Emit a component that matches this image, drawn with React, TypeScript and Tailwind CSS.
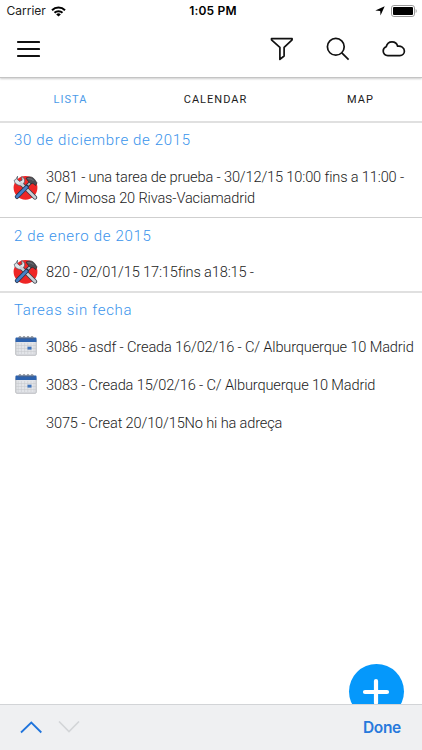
import type { ReactNode } from 'react';

type TaskIcon = 'tools' | 'calendar' | 'none';

interface Task {
  id: number;
  icon: TaskIcon;
  lines: string[];
}

interface Section {
  title: string;
  className: string;
  rowClassName: string;
  tasks: Task[];
}

const sections: Section[] = [
  {
    title: '30 de diciembre de 2015',
    className: 'h-[95px] border-b border-[#cfcfcf]',
    rowClassName: 'h-[58px]',
    tasks: [
      {
        id: 3081,
        icon: 'tools',
        lines: ['3081 - una tarea de prueba - 30/12/15 10:00 fins a 11:00 -', 'C/ Mimosa 20 Rivas-Vaciamadrid'],
      },
    ],
  },
  {
    title: '2 de enero de 2015',
    className: 'h-[75px] border-b-2 border-[#e0e0e0] pt-px',
    rowClassName: 'h-[35px]',
    tasks: [{ id: 820, icon: 'tools', lines: ['820 - 02/01/15 17:15fins a18:15 -'] }],
  },
  {
    title: 'Tareas sin fecha',
    className: '',
    rowClassName: 'relative -top-px h-[38.3px]',
    tasks: [
      { id: 3086, icon: 'calendar', lines: ['3086 - asdf - Creada 16/02/16 - C/ Alburquerque 10 Madrid'] },
      { id: 3083, icon: 'calendar', lines: ['3083 - Creada 15/02/16 - C/ Alburquerque 10 Madrid'] },
      { id: 3075, icon: 'none', lines: ['3075 - Creat 20/10/15No hi ha adreça'] },
    ],
  },
];

function ToolsIcon() {
  return (
    <svg width="25" height="25" viewBox="0 0 25 25" fill="none">
      <circle cx="12.5" cy="12.8" r="11.9" fill="#ee2626" />
      {/* hammer */}
      <path d="m12 13 6-6" stroke="#2b3442" strokeWidth="3.6" />
      <path d="m12 13 6-6" stroke="#aab6c2" strokeWidth="1.8" />
      <path d="M13 3.2c3-2 6.4-1.6 8.4 1L24 7.9l-1.5 2.6-2.6-2.2-2.2.4-2.5-2.6Z" fill="#4b4d53" stroke="#26282d" strokeWidth=".7" />
      <path d="m14.5 3.6 4.2.6 1.8 1.8" stroke="#7d8189" strokeWidth=".8" />
      {/* wrench */}
      <path d="M8 8.5 22 22.5" stroke="#3a3f49" strokeWidth="4.2" strokeLinecap="round" />
      <path
        d="M4.6 1.2 4.2 4.4l2.4 2 2.5-1.2-.4-3.5c2.8 1 3.5 4.1 2.3 6.2L8.5 10.2C5.5 11 1.7 9.2 1.2 5.3l1.6-.8Z"
        fill="#dfe5ea"
        stroke="#535d69"
        strokeWidth=".8"
      />
      <path d="M8 8.5 22 22.5" stroke="#c9cfd6" strokeWidth="2.6" strokeLinecap="round" />
      <path d="m4 21.8 9.8-10" stroke="#27364e" strokeWidth="4.4" strokeLinecap="round" />
      <path d="m4 21.8 9.4-9.6" stroke="#4680c8" strokeWidth="2.7" strokeLinecap="round" />
    </svg>
  );
}

function CalendarIcon() {
  return (
    <svg width="22" height="20" viewBox="0 0 22 20" fill="none">
      <rect x=".8" y="3" width="20.4" height="16.2" rx=".8" fill="#e3e5e9" stroke="#b4b6ba" />
      <path d="M.5 2.5c0-.7.5-1 1-1h19c.6 0 1 .4 1 1V6H.5Z" fill="#2d62ae" />
      <path d="M3.2 7v11M6.4 7v11M9.6 7v11M12.8 7v11M16 7v11M19 7v11M1 9.5h20M1 12.5h20M1 15.5h20" stroke="#c4c6cb" strokeWidth=".5" />
      <path d="M4 3V.8h2V3M8 3V.8h2V3M12 3V.8h2V3M16 3V.8h2V3" stroke="#65686e" strokeWidth=".8" />
      <rect x="12.5" y="10.7" width="4" height="2.9" fill="#3d73bc" />
    </svg>
  );
}

function StatusBar() {
  return (
    <div className="grid h-[22px] grid-cols-3 items-center pr-[5.5px] pl-[6.5px] font-['Inter',sans-serif] text-[12px] text-black">
      <div className="flex items-center gap-[5px]">
        <span className="text-[#222]">Carrier</span>
        <svg width="15" height="11" viewBox="0 0 15 11" fill="none" stroke="#000" strokeWidth="2">
          <path d="M1 4.2a9.2 9.2 0 0 1 13 0" />
          <path d="M3.5 6.8a5.7 5.7 0 0 1 8 0" />
          <path d="M7.5 10.6 5.2 8.4a3.3 3.3 0 0 1 4.6 0Z" fill="#000" stroke="none" />
        </svg>
      </div>
      <span className="pl-[3px] text-center font-semibold tracking-[0.2px] whitespace-nowrap">1:05 PM</span>
      <div className="flex items-center justify-end gap-[6px]">
        <svg width="10" height="10" viewBox="0 0 10 10" fill="#000">
          <path d="M9.7.3 5.5 9.6 5.2 4.9.3 4.5Z" />
        </svg>
        <svg width="26" height="12" viewBox="0 0 26 12" fill="none">
          <rect x=".5" y=".5" width="23" height="11" rx="2.4" stroke="#999" />
          <rect x="2" y="2" width="20" height="8" rx="1" fill="#000" />
          <path d="M24.7 4v4c1.3-.7 1.3-3.3 0-4Z" fill="#999" />
        </svg>
      </div>
    </div>
  );
}

function IconButton({ label, children }: { label: string; children: ReactNode }) {
  return (
    <button aria-label={label} className="flex h-[54px] w-[56px] items-center justify-center">
      {children}
    </button>
  );
}

function Toolbar() {
  return (
    <div className="flex h-[54px] items-center justify-between">
      <IconButton label="Menu">
        <svg width="24" height="18" viewBox="0 0 24 18" stroke="#111" strokeWidth="1.9" strokeLinecap="round">
          <path d="M1.9 2h21.2M1.9 9h21.2M1.9 16h21.2" />
        </svg>
      </IconButton>
      <div className="flex">
        <IconButton label="Filter">
          <svg width="24" height="24" viewBox="0 0 24 24" fill="none" stroke="#111" strokeWidth="1.7" strokeLinejoin="round">
            <path d="M1.5 1.7h20.6v1.1l-8 7.6v8.6l-4.2 3.4v-12L1.5 2.8Z" />
          </svg>
        </IconButton>
        <IconButton label="Search">
          <svg width="24" height="24" viewBox="0 0 24 24" fill="none" stroke="#111" strokeWidth="1.7">
            <circle cx="9.8" cy="9.8" r="8.4" />
            <path d="m15.8 15.8 6.8 6.8" />
          </svg>
        </IconButton>
        <IconButton label="Sync">
          <svg width="24" height="18" viewBox="0 0 24 18" fill="none" stroke="#111" strokeWidth="1.7" strokeLinejoin="round">
            <path d="M5.8 15.6C3.3 15.6 1.2 13.8 1.2 11c0-2 1.2-3.5 3-4.2C5 3.4 7.4 1.8 10 1.8c2.8 0 5 1.8 5.6 4.4 3.3-.6 6.8 1.4 6.8 4.8 0 2.6-1.9 4.6-4.6 4.6Z" />
          </svg>
        </IconButton>
      </div>
    </div>
  );
}

function TaskRow({ task, className }: { task: Task; className: string }) {
  return (
    <li className={`flex items-center pl-[13px] ${className}`}>
      <span className="flex w-[33px] shrink-0 items-center pb-[2px]">
        {task.icon === 'tools' && <ToolsIcon />}
        {task.icon === 'calendar' && (
          <span className="pl-[2px]">
            <CalendarIcon />
          </span>
        )}
      </span>
      <div className="text-[14.6px] leading-[21px] font-light tracking-[-0.15px] whitespace-nowrap text-[#1c1c1c]">
        {task.lines.map((line) => (
          <p key={line}>{line}</p>
        ))}
      </div>
    </li>
  );
}

export default function App() {
  return (
    <div className="flex h-[750px] w-[422px] flex-col overflow-hidden bg-white font-['Roboto',sans-serif]">
      <header className="relative h-[78px] shrink-0 border-b border-[#c4c4c4] shadow-[0_1px_2px_rgba(0,0,0,0.2)]">
        <StatusBar />
        <Toolbar />
      </header>

      <nav className="grid h-[45px] shrink-0 grid-cols-[140px_150px_1fr] items-center border-b-2 border-[#e0e0e0] text-center text-[11px] tracking-[1px] text-[#1c1c1c]">
        <span className="pt-px pl-px text-[#4c9be8]">LISTA</span>
        <span className="pt-px pl-px">CALENDAR</span>
        <span className="pt-px pl-[9px]">MAP</span>
      </nav>

      <main className="relative min-h-0 flex-1">
        {sections.map((section) => (
          <section key={section.title} className={section.className}>
            <h2 className="h-[36px] pl-[14px] text-[15px] leading-[35px] font-[350] tracking-[0.66px] text-[#3a94ec]">
              {section.title}
            </h2>
            <ul>
              {section.tasks.map((task) => (
                <TaskRow key={task.id} task={task} className={section.rowClassName} />
              ))}
            </ul>
          </section>
        ))}

        <button
          aria-label="Add task"
          className="absolute right-[18.5px] bottom-[-15px] flex size-[55px] items-center justify-center rounded-full bg-[#0598fb]"
        >
          <svg width="28" height="28" viewBox="0 0 28 28" stroke="#fff" strokeWidth="4.2" strokeLinecap="round">
            <path d="M14 3v22M3 14h22" />
          </svg>
        </button>
      </main>

      <footer className="relative flex h-[46px] shrink-0 items-center justify-between border-t border-[#d2d4d7] bg-[#eff0f2] pr-[21px] pl-[20px]">
        <div className="flex gap-[16px]">
          <svg width="22" height="13" viewBox="0 0 22 13" fill="none" stroke="#1f74dc" strokeWidth="1.8">
            <path d="M1 11.5 11.3 1.5l10 10" />
          </svg>
          <svg width="22" height="13" viewBox="0 0 22 13" fill="none" stroke="#d3d5d8" strokeWidth="1.6">
            <path d="m1 .5 10 10 10-10" />
          </svg>
        </div>
        <button className="pt-px font-['Inter',sans-serif] text-[15.5px] font-semibold tracking-[-0.3px] text-[#2779dc]">
          Done
        </button>
      </footer>
    </div>
  );
}
